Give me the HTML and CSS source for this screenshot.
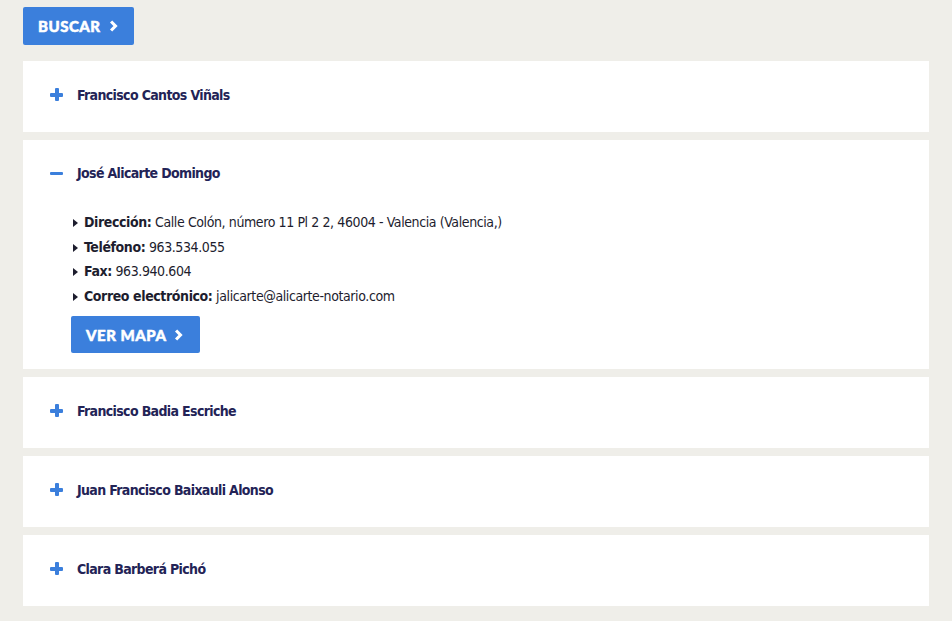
FILE: index.html
```html
<!DOCTYPE html>
<html lang="es">
<head>
<meta charset="utf-8">
<title>Notarios</title>
<link rel="stylesheet" href="styles.css">
</head>
<body>
<main class="page">
  <div class="search-row">
    <button class="btn btn-search">BUSCAR <svg class="chev" viewBox="0 0 10 14" width="9" height="12"><path d="M2.2 1.8 L7.3 7 L2.2 12.2" fill="none" stroke="currentColor" stroke-width="3.6"/></svg></button>
  </div>

  <ul class="accordion">
    <li class="item">
      <div class="item-head"><span class="toggle plus"></span><span class="name">Francisco Cantos Viñals</span></div>
    </li>
    <li class="item open">
      <div class="item-head"><span class="toggle minus"></span><span class="name">José Alicarte Domingo</span></div>
      <div class="item-body">
        <ul class="details">
          <li><b>Dirección:</b> Calle Colón, número 11 Pl 2 2, 46004 - Valencia (Valencia,)</li>
          <li><b>Teléfono:</b> 963.534.055</li>
          <li><b>Fax:</b> 963.940.604</li>
          <li><b>Correo electrónico:</b> jalicarte@alicarte-notario.com</li>
        </ul>
        <button class="btn btn-map">VER MAPA <svg class="chev" viewBox="0 0 10 14" width="9" height="12"><path d="M2.2 1.8 L7.3 7 L2.2 12.2" fill="none" stroke="currentColor" stroke-width="3.6"/></svg></button>
      </div>
    </li>
    <li class="item">
      <div class="item-head"><span class="toggle plus"></span><span class="name">Francisco Badia Escriche</span></div>
    </li>
    <li class="item">
      <div class="item-head"><span class="toggle plus"></span><span class="name">Juan Francisco Baixauli Alonso</span></div>
    </li>
    <li class="item">
      <div class="item-head"><span class="toggle plus"></span><span class="name">Clara Barberá Pichó</span></div>
    </li>
  </ul>
</main>
</body>
</html>
```

FILE: styles.css
```css
html, body {
  margin: 0;
  padding: 0;
  background: #efeee9;
}

.page {
  padding: 7px 23px 0 23px;
  font-family: "DejaVu Sans Condensed", "Liberation Sans", sans-serif;
}

.btn {
  display: inline-flex;
  align-items: center;
  gap: 8px;
  border: 0;
  border-radius: 2px;
  background: #3b7fdc;
  color: #fff;
  font-family: Lato, "Open Sans", sans-serif;
  font-weight: 900;
  font-size: 15px;
  letter-spacing: 0.5px;
  -webkit-text-stroke: 0.5px #fff;
  cursor: pointer;
}

.btn-search {
  height: 38px;
  padding: 0 16px 0 15px;
}

.btn-map {
  height: 37px;
  padding: 0 17px 0 15px;
  margin-top: 8px;
}

.chev {
  display: block;
}

.search-row {
  margin-bottom: 16px;
}

.accordion {
  list-style: none;
  margin: 0;
  padding: 0;
  display: flex;
  flex-direction: column;
  gap: 8px;
}

.item {
  background: #fff;
}

.item-head {
  height: 71px;
  box-sizing: border-box;
  padding: 0 0 4px 27px;
  display: flex;
  align-items: center;
}

.open .item-head {
  height: 67px;
  padding-bottom: 1px;
}

.name {
  color: #232356;
  font-weight: 700;
  font-size: 14px;
  letter-spacing: -0.65px;
}

.toggle {
  position: relative;
  width: 13px;
  height: 13px;
  margin-right: 14px;
}

.toggle::before,
.toggle::after {
  content: "";
  position: absolute;
  background: #3b7fdc;
  border-radius: 1px;
}

.toggle::before {
  left: 0;
  right: 0;
  top: 5px;
  height: 3.5px;
}

.plus::after {
  top: 0;
  bottom: 0;
  left: 5px;
  width: 3.5px;
}

.minus::after {
  display: none;
}

.item-body {
  padding: 3px 0 16px 48px;
}

.details {
  list-style: none;
  margin: 0;
  padding: 0;
  color: #1d1d2e;
  font-size: 14px;
  letter-spacing: -0.4px;
  line-height: 24.5px;
}

.details li {
  position: relative;
  padding-left: 13px;
}

.details li::before {
  content: "";
  position: absolute;
  left: 2px;
  top: 9px;
  border-left: 5px solid #1d1d2e;
  border-top: 4px solid transparent;
  border-bottom: 4px solid transparent;
}

.details b {
  font-weight: 700;
}
```
